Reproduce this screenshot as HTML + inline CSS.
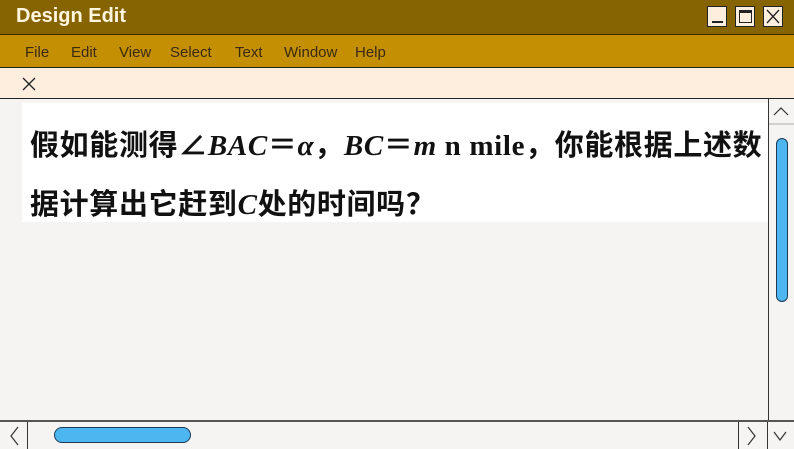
<!DOCTYPE html>
<html><head><meta charset="utf-8"><style>
*{margin:0;padding:0;box-sizing:border-box}
body{width:794px;height:447px;overflow:hidden;background:#f5f4f2;position:relative;font-family:"Liberation Sans","DejaVu Sans",sans-serif}
.title{position:absolute;left:0;top:0;width:794px;height:35px;background:#876402;border-bottom:1px solid #3a2a00}
.title span{position:absolute;left:16px;top:5px;color:#fff6e0;font-weight:bold;font-size:20px}
.btn{position:absolute;top:6px;width:20px;height:21px;background:#fdeede;border:1px solid #222}
.menu{position:absolute;left:0;top:35px;width:794px;height:33px;background:#c48f02;border-bottom:1px solid #222}
.menu span{position:absolute;top:9px;font-size:15px;color:#3a2a10}
.tool{position:absolute;left:0;top:68px;width:794px;height:31px;background:#fdeede;border-bottom:1px solid #222}
.white{position:absolute;left:22px;top:103px;width:746px;height:119px;background:#fff}
.line{position:absolute;left:30px;font-family:"Liberation Serif",serif;font-weight:bold;font-size:29px;color:#111;white-space:nowrap;letter-spacing:0.65px}
.line i{font-style:italic}
.c{font-family:"Noto Sans CJK SC",sans-serif;font-weight:bold}
.vs{position:absolute;left:768px;top:99px;width:26px;height:321px;border-left:1px solid #333;background:#f5f4f2}
.hs{position:absolute;left:0;top:420px;width:794px;height:27px;border-top:2px solid #555;background:#f5f4f2}
</style></head><body>
<div class="title"><span>Design Edit</span>
<div class="btn" style="left:707px"><div style="position:absolute;left:4px;bottom:3px;width:11px;height:2px;background:#222"></div></div>
<div class="btn" style="left:735px"><div style="position:absolute;left:3px;top:3px;width:13px;height:13px;border:1px solid #222;border-top:3px solid #222"></div></div>
<div class="btn" style="left:763px"><svg width="18" height="19" style="position:absolute;left:0;top:0"><path d="M3 3L15 16M15 3L3 16" stroke="#222" stroke-width="1.3"/></svg></div>
</div>
<div class="menu"><span style="left:25px">File</span><span style="left:71px">Edit</span><span style="left:119px">View</span><span style="left:170px">Select</span><span style="left:235px">Text</span><span style="left:284px">Window</span><span style="left:355px">Help</span></div>
<div class="tool"><svg width="14" height="14" style="position:absolute;left:22px;top:9px"><path d="M1 1L13 13M13 1L1 13" stroke="#222" stroke-width="1.3"/></svg></div>
<div class="white"></div>
<div class="line" style="top:122px"><span class="c">假如能测得∠</span><i>BAC</i><span class="c">＝</span><i>α</i><span class="c">，</span><i>BC</i><span class="c">＝</span><i>m</i> n mile<span class="c">，你能根据上述数</span></div>
<div class="line" style="top:181px"><span class="c">据计算出它赶到</span><i>C</i><span class="c">处的时间吗？</span></div>
<div class="vs">
<svg width="25" height="26" style="position:absolute;left:0;top:0"><path d="M5 16L12 9L19 16" stroke="#333" fill="none" stroke-width="1.2"/><path d="M0 25H25" stroke="#aaa"/></svg>
<div style="position:absolute;left:7px;top:39px;width:12px;height:164px;background:#4db6f0;border:1px solid #1a3a55;border-radius:6px"></div>
</div>
<div class="hs">
<div style="position:absolute;left:27px;top:0;width:1px;height:27px;background:#333"></div>
<div style="position:absolute;left:738px;top:0;width:1px;height:27px;background:#333"></div>
<div style="position:absolute;left:767px;top:0;width:1px;height:27px;background:#333"></div>
<svg width="794" height="26" style="position:absolute;left:0;top:0"><path d="M18 5L11 14L18 23" stroke="#333" fill="none" stroke-width="1.2"/><path d="M748 5L755 14L748 23" stroke="#333" fill="none" stroke-width="1.2"/><path d="M774 10L780 18L786 10" stroke="#333" fill="none" stroke-width="1.2"/></svg>
<div style="position:absolute;left:54px;top:5px;width:137px;height:16px;background:#4db6f0;border:1px solid #1a3a55;border-radius:8px"></div>
</div>
</body></html>
